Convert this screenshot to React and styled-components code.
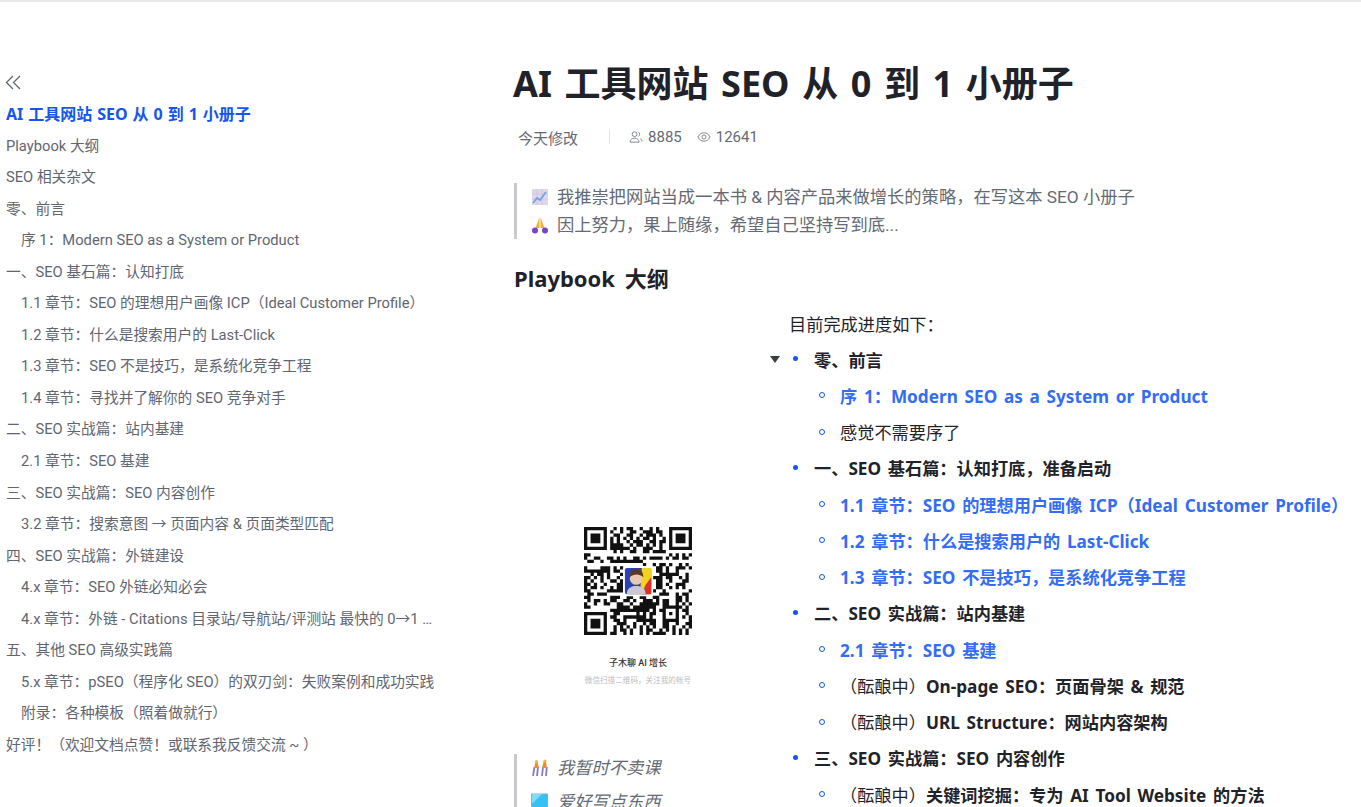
import React from 'react'
import styled, { createGlobalStyle } from 'styled-components'

const font = `Roboto, "Noto Sans CJK SC", sans-serif`
const boldFont = `"Noto Sans", "Noto Sans CJK SC", sans-serif`

const GlobalStyle = createGlobalStyle`
    html, body {
        margin: 0;
        padding: 0;
        background: #fff;
        overflow: hidden;
    }
    body {
        font-family: ${font};
        color: #1f2329;
    }
`

const Root = styled.div`
    display: flex;
    height: 805px;
    overflow: hidden;
    border-top: 2px solid #e8e8e8;
`

const Sidebar = styled.aside`
    flex: 0 0 514px;
    box-sizing: border-box;
    padding: 70px 0 0 6px;
`

const Collapse = styled.div`
    height: 24px;
    color: #5f6672;
    svg {
        display: block;
        margin: 3px 0 0 -1px;
    }
`

const NavItem = styled.div`
    box-sizing: border-box;
    width: 434px;
    height: 31.55px;
    line-height: 31.55px;
    padding-left: ${p => (p.$sub ? '15px' : '0')};
    font-family: ${p => (p.$active ? boldFont : font)};
    font-size: ${p => (p.$active ? '16px' : '14.72px')};
    font-weight: ${p => (p.$active ? 700 : 400)};
    word-spacing: ${p => (p.$active ? '.05em' : '0')};
    color: ${p => (p.$active ? '#1456f0' : '#5f6672')};
    white-space: nowrap;
    overflow: hidden;
    text-overflow: ellipsis;
`

const Main = styled.main`
    flex: 1;
    min-width: 0;
`

const Title = styled.h1`
    margin: 58px 0 0 -1px;
    font-family: ${boldFont};
    font-size: 36px;
    line-height: 48px;
    font-weight: 700;
    word-spacing: .09em;
    color: #1f2329;
    white-space: nowrap;
`

const Meta = styled.div`
    display: flex;
    align-items: center;
    height: 22px;
    margin-top: 18px;
    padding-left: 4px;
    font-size: 15px;
    color: #646a73;
`

const Divider = styled.span`
    width: 1px;
    height: 14px;
    margin: 0 19px 0 31px;
    background: #e4e5e8;
`

const Stat = styled.span`
    display: inline-flex;
    align-items: center;
    gap: 5px;
    margin-right: 15px;
`

const Quote = styled.blockquote`
    display: flex;
    flex-direction: column;
    gap: ${p => (p.$italic ? '6px' : '0')};
    margin: ${p => p.$margin};
    padding-left: 14px;
    border-left: 3px solid #c8c9cc;
    font-size: 17.28px;
    line-height: 28px;
    color: #646a73;
    font-style: ${p => (p.$italic ? 'italic' : 'normal')};
`

const QuoteLine = styled.div`
    display: flex;
    align-items: center;
    gap: 8px;
    height: 28px;
    white-space: nowrap;
`

const Heading = styled.h2`
    margin: 22px 0 0;
    font-family: ${boldFont};
    font-size: 22px;
    line-height: 34px;
    font-weight: 700;
    word-spacing: .18em;
    color: #1f2329;
`

const Columns = styled.div`
    display: grid;
    grid-template-columns: 248px 1fr;
    column-gap: 27px;
    margin-top: 16px;
`

const LeftColumn = styled.div`
    display: flex;
    flex-direction: column;
`

const QrCard = styled.figure`
    display: flex;
    flex-direction: column;
    align-items: center;
    margin: 0;
    padding-top: 216px;
    height: 443px;
    box-sizing: border-box;
`

const QrName = styled.figcaption`
    margin-top: 21px;
    font-size: 9px;
    line-height: 14px;
    font-weight: 500;
    color: #333;
`

const QrHint = styled.div`
    margin-top: 5px;
    font-size: 7.6px;
    line-height: 12px;
    color: #bdbdbd;
`

const Lead = styled.p`
    margin: 0;
    height: 30px;
    font-size: 17.2px;
    line-height: 28px;
    color: #1f2329;
`

const Row = styled.div`
    position: relative;
    display: flex;
    align-items: center;
    height: 36.25px;
    padding-left: ${p => (p.$sub ? '51px' : '25px')};
    font-size: 17.2px;
    white-space: pre;
    color: ${p => (p.$link ? '#336df4' : '#1f2329')};
    font-family: ${p => (p.$bold ? boldFont : font)};
    font-weight: ${p => (p.$bold ? 700 : 400)};
    word-spacing: ${p => (p.$bold ? '.13em' : '0')};
    &:before {
        content: '';
        position: absolute;
        box-sizing: border-box;
        top: 50%;
        left: ${p => (p.$sub ? '30px' : '4px')};
        width: ${p => (p.$sub ? '6px' : '5px')};
        height: ${p => (p.$sub ? '6px' : '5px')};
        margin-top: -3px;
        border-radius: 50%;
        background: ${p => (p.$sub ? 'transparent' : '#1456f0')};
        border: ${p => (p.$sub ? '1px solid #1456f0' : 'none')};
    }
`

const Caret = styled.span`
    position: absolute;
    left: -19px;
    top: 50%;
    margin-top: -3px;
    width: 0;
    height: 0;
    border-left: 5px solid transparent;
    border-right: 5px solid transparent;
    border-top: 7px solid #3a3d42;
`

const Strong = styled.b`
    font-family: ${boldFont};
    font-weight: 700;
    word-spacing: .13em;
`

const navItems = [
    { text: 'AI 工具网站 SEO 从 0 到 1 小册子', active: true },
    { text: 'Playbook 大纲' },
    { text: 'SEO 相关杂文' },
    { text: '零、前言' },
    { text: '序 1：Modern SEO as a System or Product', sub: true },
    { text: '一、SEO 基石篇：认知打底' },
    { text: '1.1 章节：SEO 的理想用户画像 ICP（Ideal Customer Profile）', sub: true },
    { text: '1.2 章节：什么是搜索用户的 Last-Click', sub: true },
    { text: '1.3 章节：SEO 不是技巧，是系统化竞争工程', sub: true },
    { text: '1.4 章节：寻找并了解你的 SEO 竞争对手', sub: true },
    { text: '二、SEO 实战篇：站内基建' },
    { text: '2.1 章节：SEO 基建', sub: true },
    { text: '三、SEO 实战篇：SEO 内容创作' },
    { text: '3.2 章节：搜索意图 → 页面内容 & 页面类型匹配', sub: true },
    { text: '四、SEO 实战篇：外链建设' },
    { text: '4.x 章节：SEO 外链必知必会', sub: true },
    { text: '4.x 章节：外链 - Citations 目录站/导航站/评测站 最快的 0→1 外链来源和方法', sub: true },
    { text: '五、其他 SEO 高级实践篇' },
    { text: '5.x 章节：pSEO（程序化 SEO）的双刃剑：失败案例和成功实践', sub: true },
    { text: '附录：各种模板（照着做就行）', sub: true },
    { text: '好评！（欢迎文档点赞！或联系我反馈交流 ~ ）' }
]

function CollapseIcon() {
    return (
        <svg width="17" height="15" viewBox="0 0 17 15" fill="none" stroke="currentColor" strokeWidth="1.3">
            <path d="M8 1L1.500 7.500 8 14M15 1L8.500 7.500 15 14" />
        </svg>
    )
}

function UsersIcon() {
    return (
        <svg width="14" height="14" viewBox="0 0 15 14" fill="none" stroke="#7b818c" strokeWidth="1">
            <circle cx="6" cy="4" r="2.600" />
            <path d="M1.200 12.500c0-2.800 2-4.200 4.800-4.200s4.800 1.400 4.800 4.200z" />
            <path d="M10 1.800a2.400 2.400 0 0 1 0 4.400M12 8.600c1.200.6 1.900 1.800 1.900 3.400" />
        </svg>
    )
}

function EyeIcon() {
    return (
        <svg width="14" height="14" viewBox="0 0 15 14" fill="none" stroke="#7b818c" strokeWidth="1">
            <path d="M1 7c1.500-3 3.700-4.500 6.500-4.500S12.500 4 14 7c-1.500 3-3.700 4.500-6.500 4.500S2.500 10 1 7z" />
            <circle cx="7.500" cy="7" r="2.200" />
        </svg>
    )
}

function ChartEmoji() {
    return (
        <svg width="18" height="18" viewBox="0 0 18 18">
            <rect x="1" y="1" width="16" height="16" fill="#dfd6ea" />
            <path d="M1 6h16M1 11h16M6 1v16M11 1v16" stroke="#c9bfda" strokeWidth=".6" />
            <path d="M2 15l4-5 3 2 6-8" fill="none" stroke="#6fa0e8" strokeWidth="1.700" />
        </svg>
    )
}

function PrayEmoji() {
    return (
        <svg width="18" height="18" viewBox="0 0 18 18">
            <path d="M8.500 1L4.500 12h4zM9.500 1l4 11h-4z" fill="#f5b335" />
            <circle cx="4" cy="14.500" r="3" fill="#7a43c9" />
            <circle cx="14" cy="14.500" r="3" fill="#7a43c9" />
        </svg>
    )
}

function PeopleEmoji() {
    return (
        <svg width="18" height="18" viewBox="0 0 18 18">
            <path d="M2 17l1.500-9M6 17l1-9" stroke="#8a7bb8" strokeWidth="1.800" />
            <path d="M11 17l1-9M15 17l.8-9" stroke="#8a7bb8" strokeWidth="1.800" />
            <path d="M3 9l1.500-6h2L8 9zM11 9l1.800-7h2L16 9z" fill="#ef8a3a" />
            <circle cx="5.500" cy="2.500" r="1.600" fill="#f2b33a" />
            <circle cx="14" cy="2" r="1.600" fill="#f2b33a" />
        </svg>
    )
}

function ScreenEmoji() {
    return (
        <svg width="18" height="18" viewBox="0 0 18 18">
            <rect x=".5" y="1" width="16" height="14" fill="#35c1f1" stroke="#8aa8d8" />
            <path d="M1 1h10L1 11z" fill="#7fdcf8" />
        </svg>
    )
}

function qrPath(size) {
    // finder corners are fixed, the rest is filled from a small seeded generator
    let seed = 20240611
    const next = () => {
        seed = (seed * 1103515245 + 12345) & 0x7fffffff
        return (seed >> 12) & 1
    }
    const reserved = (x, y) => {
        const inTopLeft = x < 8 && y < 8
        const inTopRight = x >= size - 8 && y < 8
        const inBottomLeft = x < 8 && y >= size - 8
        const inAlign = x >= size - 9 && x < size - 4 && y >= size - 9 && y < size - 4
        return inTopLeft || inTopRight || inBottomLeft || inAlign
    }
    let d = ''
    for (let y = 0; y < size; y++) {
        for (let x = 0; x < size; x++) {
            const bit = next()
            if (!reserved(x, y) && bit) d += `M${x} ${y}h1v1h-1z`
        }
    }
    const corners = [[0, 0], [size - 7, 0], [0, size - 7]]
    corners.forEach(([x, y]) => {
        d += `M${x} ${y}h7v1h-7zM${x} ${y + 6}h7v1h-7zM${x} ${y + 1}h1v5h-1zM${x + 6} ${y + 1}h1v5h-1zM${x + 2} ${y + 2}h3v3h-3z`
    })
    const a = size - 9
    d += `M${a} ${a}h5v1h-5zM${a} ${a + 4}h5v1h-5zM${a} ${a + 1}h1v3h-1zM${a + 4} ${a + 1}h1v3h-1zM${a + 2} ${a + 2}h1v1h-1z`
    return d
}

function QrCode() {
    return (
        <svg width="108" height="108" viewBox="0 0 33 33">
            <path d={qrPath(33)} fill="#111" />
            <g transform="translate(12.500 12.500) scale(1.150) translate(-11 -11)">
                <rect x="10.500" y="10.500" width="8" height="8" rx=".8" fill="#fff" />
                <rect x="11" y="11" width="7" height="7" rx=".6" fill="#2b3fb8" />
                <path d="M15.500 11h2.500v2.500L16 18h-1z" fill="#f2d21e" />
                <path d="M16.500 15.500l1.500-2V18h-2.500z" fill="#d8342c" />
                <path d="M11.500 18c0-1.500 1-2.200 2.500-2.200s2.500.7 2.500 2.200z" fill="#c9c9c9" />
                <circle cx="14" cy="13.800" r="1.700" fill="#e8c8ae" />
                <path d="M12.200 13.500c0-1.700 1-2.200 1.900-2.200s1.800.6 1.800 2.200c-1-1-2.500-1-3.700 0z" fill="#5a3a24" />
            </g>
        </svg>
    )
}

function App() {
    return (
        <Root>
            <GlobalStyle />
            <Sidebar>
                <Collapse><CollapseIcon /></Collapse>
                {navItems.map(item => (
                    <NavItem key={item.text} $sub={item.sub} $active={item.active}>{item.text}</NavItem>
                ))}
            </Sidebar>
            <Main>
                <Title>AI 工具网站 SEO 从 0 到 1 小册子</Title>
                <Meta>
                    今天修改
                    <Divider />
                    <Stat><UsersIcon />8885</Stat>
                    <Stat><EyeIcon />12641</Stat>
                </Meta>
                <Quote $margin="35px 0 0">
                    <QuoteLine><ChartEmoji />我推崇把网站当成一本书 & 内容产品来做增长的策略，在写这本 SEO 小册子</QuoteLine>
                    <QuoteLine><PrayEmoji />因上努力，果上随缘，希望自己坚持写到底...</QuoteLine>
                </Quote>
                <Heading>Playbook 大纲</Heading>
                <Columns>
                    <LeftColumn>
                        <QrCard>
                            <QrCode />
                            <QrName>子木聊 AI 增长</QrName>
                            <QrHint>微信扫描二维码，关注我的帐号</QrHint>
                        </QrCard>
                        <Quote $italic $margin="0">
                            <QuoteLine><PeopleEmoji />我暂时不卖课</QuoteLine>
                            <QuoteLine><ScreenEmoji />爱好写点东西</QuoteLine>
                        </Quote>
                    </LeftColumn>
                    <div>
                        <Lead>目前完成进度如下：</Lead>
                        <Row $bold><Caret />零、前言</Row>
                        <Row $sub $bold $link>序 1：Modern SEO as a System or Product</Row>
                        <Row $sub>感觉不需要序了</Row>
                        <Row $bold>一、SEO 基石篇：认知打底，准备启动</Row>
                        <Row $sub $bold $link>1.1 章节：SEO 的理想用户画像 ICP（Ideal Customer Profile）</Row>
                        <Row $sub $bold $link>1.2 章节：什么是搜索用户的 Last-Click</Row>
                        <Row $sub $bold $link>1.3 章节：SEO 不是技巧，是系统化竞争工程</Row>
                        <Row $bold>二、SEO 实战篇：站内基建</Row>
                        <Row $sub $bold $link>2.1 章节：SEO 基建</Row>
                        <Row $sub>（酝酿中）<Strong>On-page SEO：页面骨架 & 规范</Strong></Row>
                        <Row $sub>（酝酿中）<Strong>URL Structure：网站内容架构</Strong></Row>
                        <Row $bold>三、SEO 实战篇：SEO 内容创作</Row>
                        <Row $sub>（酝酿中）<Strong>关键词挖掘：专为 AI Tool Website 的方法</Strong></Row>
                    </div>
                </Columns>
            </Main>
        </Root>
    )
}

export default App
